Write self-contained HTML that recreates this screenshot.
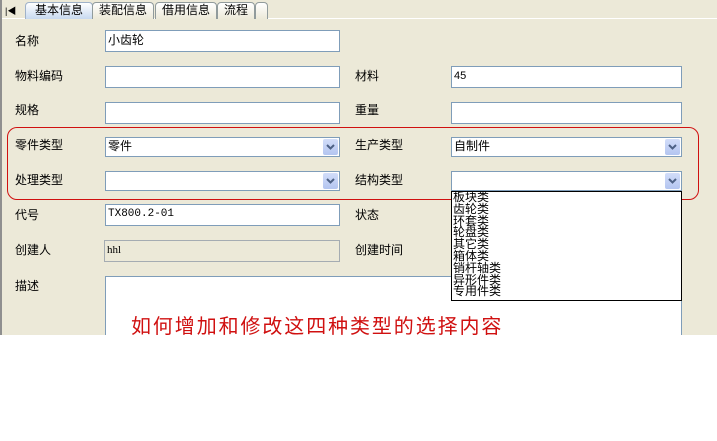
<!DOCTYPE html>
<html><head><meta charset="utf-8"><style>
*{margin:0;padding:0;box-sizing:border-box}
body{width:717px;height:441px;background:#fff;position:relative;overflow:hidden;font-family:"Liberation Sans","Noto Sans CJK SC","WenQuanYi Zen Hei",sans-serif;font-size:12px;color:#000}
.bg{position:absolute;left:0;top:0;width:717px;height:335px;background:#ECE9D8;border-left:2px solid #8f8f8f}
.tabline{position:absolute;left:2px;top:18px;width:715px;height:1px;background:#fff}
.tab{position:absolute;top:2px;height:17px;border:1px solid #919b9c;border-bottom:none;border-radius:4px 4px 0 0;background:linear-gradient(#fff,#ece9d8);font-size:12px;line-height:15px;text-align:center}
.lbl{position:absolute;font-size:12px}
.in{position:absolute;height:22px;border:1px solid #7f9db9;background:#fff;font-size:12px;line-height:18px;padding-left:2px}
.sel{position:absolute;height:20px;border:1px solid #7f9db9;background:#fff;line-height:17px;padding-left:2px}
.arr{position:absolute;right:1px;top:1px;width:15px;height:16px;background:linear-gradient(#d2ddf9,#b3c5f0);border-radius:2px}
</style></head><body>
<div class="bg"></div>
<div class="tabline"></div>
<div style="position:absolute;left:5px;top:4px;font-size:9px;color:#000">|◀</div>
<div class="tab" style="left:25px;width:68px;background:linear-gradient(#fff,#c7d9f0);border-color:#9fb2c9">基本信息</div>
<div class="tab" style="left:92px;width:62px">装配信息</div>
<div class="tab" style="left:155px;width:62px">借用信息</div>
<div class="tab" style="left:217px;width:38px">流程</div>
<div class="tab" style="left:255px;width:13px"></div>

<div class="lbl" style="left:15px;top:32px">名称</div>
<div class="in" style="left:105px;top:30px;width:235px">小齿轮</div>

<div class="lbl" style="left:15px;top:67px">物料编码</div>
<div class="in" style="left:105px;top:66px;width:235px"></div>
<div class="lbl" style="left:355px;top:67px">材料</div>
<div class="in" style="left:451px;top:66px;width:231px;font-size:11px">45</div>

<div class="lbl" style="left:15px;top:101px">规格</div>
<div class="in" style="left:105px;top:102px;width:235px"></div>
<div class="lbl" style="left:355px;top:101px">重量</div>
<div class="in" style="left:451px;top:102px;width:231px"></div>

<div class="lbl" style="left:15px;top:136px">零件类型</div>
<div class="sel" style="left:105px;top:137px;width:235px">零件<div class="arr"><svg width="15" height="16"><path d="M4 6l3.5 3.5L11 6" stroke="#4d6185" stroke-width="2" fill="none"/></svg></div></div>
<div class="lbl" style="left:355px;top:136px">生产类型</div>
<div class="sel" style="left:451px;top:137px;width:231px">自制件<div class="arr"><svg width="15" height="16"><path d="M4 6l3.5 3.5L11 6" stroke="#4d6185" stroke-width="2" fill="none"/></svg></div></div>

<div class="lbl" style="left:15px;top:171px">处理类型</div>
<div class="sel" style="left:105px;top:171px;width:235px"><div class="arr"><svg width="15" height="16"><path d="M4 6l3.5 3.5L11 6" stroke="#4d6185" stroke-width="2" fill="none"/></svg></div></div>
<div class="lbl" style="left:355px;top:171px">结构类型</div>
<div class="sel" style="left:451px;top:171px;width:231px"><div class="arr"><svg width="15" height="16"><path d="M4 6l3.5 3.5L11 6" stroke="#4d6185" stroke-width="2" fill="none"/></svg></div></div>

<div class="lbl" style="left:15px;top:206px">代号</div>
<div class="in" style="left:105px;top:204px;width:235px;font-family:'Liberation Mono',monospace;font-size:11px">TX800.2-01</div>
<div class="lbl" style="left:355px;top:206px">状态</div>

<div class="lbl" style="left:15px;top:241px">创建人</div>
<div class="in" style="left:104px;top:240px;width:236px;background:#ECE9D8;border-color:#a5acb2;font-family:'Liberation Serif',serif;font-size:11px">hhl</div>
<div class="lbl" style="left:355px;top:241px">创建时间</div>

<div class="lbl" style="left:15px;top:277px">描述</div>
<div class="in" style="left:105px;top:276px;width:577px;height:59px;border-bottom:none"></div>
<div style="position:absolute;left:131px;top:313px;font-size:20px;color:#d01010;letter-spacing:1.9px;font-family:'Noto Sans CJK SC',sans-serif;line-height:24px">如何增加和修改这四种类型的选择内容</div>

<div style="position:absolute;left:7px;top:127px;width:692px;height:73px;border:1px solid #d01010;border-radius:10px"></div>

<div style="position:absolute;left:451px;top:191px;width:231px;height:110px;border:1px solid #000;background:#fff;font-size:12px;line-height:11.8px;padding-left:1px;overflow:hidden">
板块类<br>齿轮类<br>环套类<br>轮盘类<br>其它类<br>箱体类<br>销杆轴类<br>异形件类<br>专用件类
</div>
</body></html>
